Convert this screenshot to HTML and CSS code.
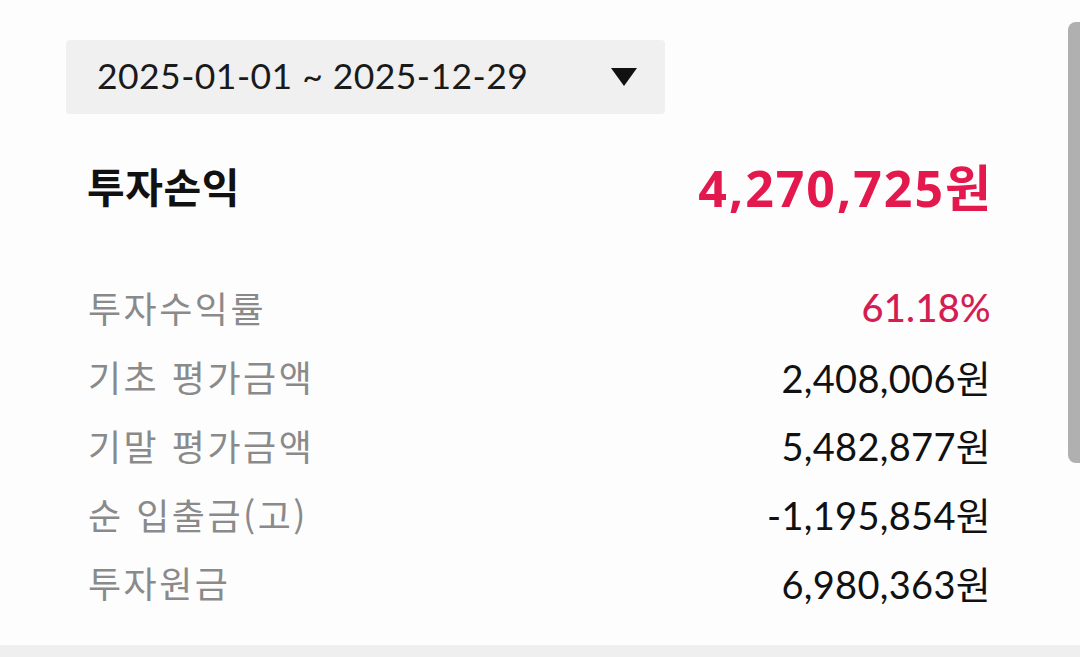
FILE: index.html
```html
<!DOCTYPE html>
<html lang="ko">
<head>
  <meta charset="UTF-8">
  <meta name="viewport" content="width=device-width, initial-scale=1.0">
  <title>투자손익</title>
  <link rel="stylesheet" href="styles.css">
</head>
<body>
  <div class="page">
    <div class="content">
      <div class="period-select">
        <span class="period-text">2025-01-01 ~ 2025-12-29</span>
        <span class="caret"></span>
      </div>

      <div class="summary">
        <span class="summary-label">투자손익</span>
        <span class="summary-value">4,270,725원</span>
      </div>

      <div class="details">
        <div class="row">
          <span class="label">투자수익률</span>
          <span class="value rate">61.18%</span>
        </div>
        <div class="row">
          <span class="label">기초 평가금액</span>
          <span class="value">2,408,006원</span>
        </div>
        <div class="row">
          <span class="label">기말 평가금액</span>
          <span class="value">5,482,877원</span>
        </div>
        <div class="row">
          <span class="label">순 입출금(고)</span>
          <span class="value">-1,195,854원</span>
        </div>
        <div class="row">
          <span class="label">투자원금</span>
          <span class="value">6,980,363원</span>
        </div>
      </div>
    </div>
    <div class="scrollbar"></div>
  </div>
  <div class="bottom-strip"></div>
</body>
</html>
```

FILE: styles.css
```css
body {
  margin: 0;
  padding: 0;
  background-color: #fdfdfd;
  font-family: Lato, "Noto Sans CJK KR", sans-serif;
  color: #111;
  height: 657px;
  overflow: hidden;
  display: flex;
  flex-direction: column;
}
.page {
  flex: 1;
  position: relative;
}
.content {
  padding: 40px 90px 0 66px;
}
.period-select {
  width: 599px;
  height: 74px;
  box-sizing: border-box;
  background-color: #f0f0f0;
  border-radius: 4px;
  display: flex;
  align-items: center;
  justify-content: space-between;
  padding: 0 28px 4px 31px;
}
.period-text {
  font-size: 35.5px;
  color: #1a1a1a;
  letter-spacing: 0.45px;
}
.caret {
  width: 0;
  height: 0;
  margin-top: 4px;
  border-left: 13px solid transparent;
  border-right: 13px solid transparent;
  border-top: 18px solid #111;
}
.summary {
  display: flex;
  justify-content: space-between;
  align-items: center;
  padding-left: 21px;
  margin-top: 40px;
  height: 62px;
}
.summary-label {
  font-family: "Noto Sans CJK KR", sans-serif;
  font-weight: 700;
  font-size: 41px;
  letter-spacing: 0.5px;
  color: #111;
}
.summary-value {
  font-family: "Noto Sans", "Noto Sans CJK KR", sans-serif;
  font-weight: 700;
  font-size: 50px;
  letter-spacing: 2px;
  margin-right: -3px;
  color: #e3184c;
}
.details {
  margin-top: 57px;
  padding-left: 22px;
}
.row {
  display: flex;
  justify-content: space-between;
  align-items: center;
  height: 68.75px;
}
.label {
  font-family: "Noto Sans CJK KR", sans-serif;
  font-size: 36px;
  letter-spacing: 2.5px;
  color: #8a8a8a;
}
.value {
  font-size: 38px;
  letter-spacing: 0.3px;
  margin-right: -1px;
  color: #111;
}
.value.rate {
  color: #d41d52;
  font-weight: 500;
}
.scrollbar {
  position: absolute;
  top: 22px;
  right: 0;
  width: 12px;
  height: 441px;
  background-color: #b0b0b0;
  border-radius: 8px 0 0 8px;
}
.bottom-strip {
  height: 12px;
  background-color: #efefef;
}
```
